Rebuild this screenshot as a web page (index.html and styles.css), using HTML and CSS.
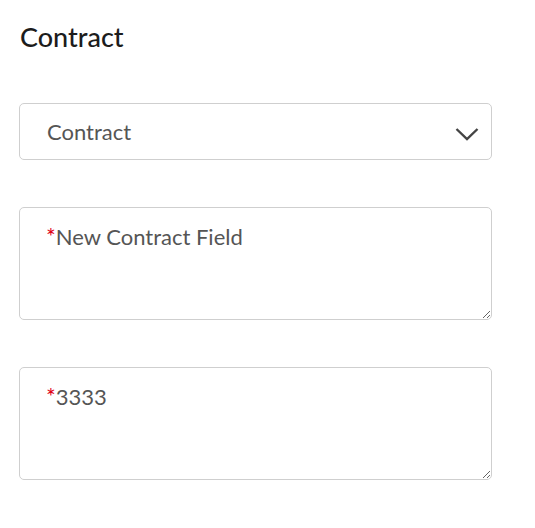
FILE: index.html
```html
<!DOCTYPE html>
<html>
<head>
<meta charset="utf-8">
<link rel="stylesheet" href="styles.css">
</head>
<body>
<div class="form">
  <h2 class="title">Contract</h2>
  <div class="select">
    <span class="select-text">Contract</span>
    <svg class="chevron" width="24" height="14" viewBox="0 0 24 14"><path d="M1.5 2 L12 12 L22.5 2" fill="none" stroke="#444" stroke-width="2.4"/></svg>
  </div>
  <div class="field">
    <textarea class="area"></textarea>
    <span class="ph"><span class="req">*</span>New Contract Field</span>
  </div>
  <div class="field">
    <textarea class="area"></textarea>
    <span class="ph"><span class="req">*</span>3333</span>
  </div>
</div>
</body>
</html>
```
FILE: styles.css
```css
html, body { margin: 0; padding: 0; background: #fff; }
body { font-family: Lato, "Open Sans", sans-serif; }
.form {
  padding: 18px 0 0 19px;
  width: 473px;
  display: flex;
  flex-direction: column;
}
.title {
  margin: 0 0 0 1px;
  font-size: 27px;
  font-weight: 500;
  color: #1c1c1c;
  line-height: 38px;
}
.select {
  margin-top: 47px;
  box-sizing: border-box;
  height: 57px;
  border: 1px solid #cfcfcf;
  border-radius: 5px;
  display: flex;
  align-items: center;
  justify-content: space-between;
  padding: 0 12px 0 27px;
}
.select-text { font-size: 22px; color: #555; }
.chevron { margin-top: 4px; }
.field { position: relative; margin-top: 47px; height: 113px; }
.area {
  display: block;
  box-sizing: border-box;
  width: 473px;
  height: 113px;
  margin: 0;
  border: 1px solid #cfcfcf;
  border-radius: 5px;
  background: #fff;
  outline: none;
}
.ph {
  position: absolute;
  left: 27px;
  top: 15px;
  font-size: 22px;
  color: #555;
  line-height: 28px;
}
.req { color: #e00016; font-size: 23px; }
```
